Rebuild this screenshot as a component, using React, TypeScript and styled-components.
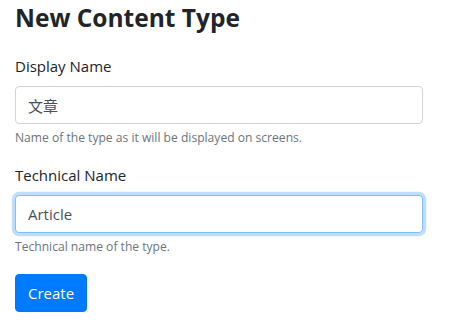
import React, { useEffect, useRef, useState } from "react";
import styled, { createGlobalStyle, css } from "styled-components";

const GlobalStyle = createGlobalStyle`
  body {
    margin: 0;
    background: #fff;
    color: #212529;
    font-family: "Open Sans", "Noto Sans CJK SC", sans-serif;
    font-size: 15px;
    line-height: 24px;
  }
  * {
    box-sizing: border-box;
  }
`;

const Page = styled.div`
  padding: 0 15px;
`;

const Form = styled.form`
  width: 408px;
`;

const Title = styled.h3`
  margin: 0 0 19px;
  padding-top: 1px;
  font-size: 24.5px;
  font-weight: 700;
  line-height: 34px;
`;

const FormGroup = styled.div`
  margin-bottom: 16px;
`;

const Label = styled.label`
  display: inline-block;
  margin-bottom: 8px;
`;

const Input = styled.input<{ $focused?: boolean }>`
  display: block;
  width: 100%;
  height: 38px;
  padding: 6px 12px;
  font: inherit;
  color: #495057;
  background: #fff;
  border: 1px solid #ced4da;
  border-radius: 4px;
  outline: none;

  ${(p) =>
    p.$focused &&
    css`
      border-color: #80bdff;
      box-shadow: 0 0 0 3.2px rgba(0, 123, 255, 0.25);
    `}
`;

const Help = styled.small`
  display: block;
  margin-top: 4px;
  font-size: 12.1px;
  line-height: 19.2px;
  color: #6c757d;
`;

const Button = styled.button`
  display: inline-block;
  margin-top: 2px;
  padding: 6px 12px;
  font: inherit;
  line-height: 24px;
  color: #fff;
  background: #007bff;
  border: 1px solid #007bff;
  border-radius: 4px;
  cursor: pointer;
`;

const App = () => {
  const [displayName, setDisplayName] = useState<string>("文章");
  const [technicalName, setTechnicalName] = useState<string>("Article");
  const techRef = useRef<HTMLInputElement>(null);

  useEffect(() => {
    const el = techRef.current;
    if (el) {
      el.focus();
      el.setSelectionRange(el.value.length, el.value.length);
    }
  }, []);

  return (
    <Page>
      <GlobalStyle />
      <Title>New Content Type</Title>
      <Form onSubmit={(e) => e.preventDefault()}>
        <FormGroup>
          <Label htmlFor="displayName">Display Name</Label>
          <Input
            id="displayName"
            value={displayName}
            onChange={(e) => setDisplayName(e.target.value)}
          />
          <Help>Name of the type as it will be displayed on screens.</Help>
        </FormGroup>

        <FormGroup>
          <Label htmlFor="technicalName">Technical Name</Label>
          <Input
            id="technicalName"
            ref={techRef}
            $focused
            value={technicalName}
            onChange={(e) => setTechnicalName(e.target.value)}
          />
          <Help>Technical name of the type.</Help>
        </FormGroup>

        <Button type="submit">Create</Button>
      </Form>
    </Page>
  );
};

export default App;
